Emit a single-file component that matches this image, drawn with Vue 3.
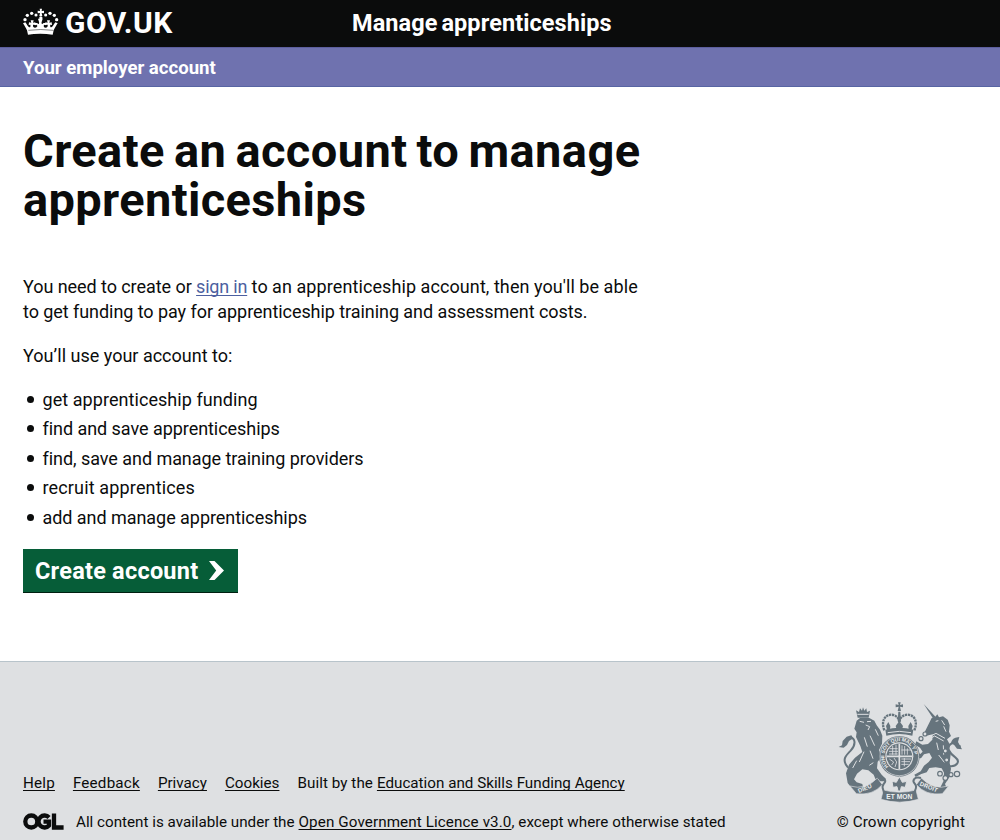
<script setup>
const uses = [
  { text: 'get apprenticeship funding', cls: 'u1' },
  { text: 'find and save apprenticeships', cls: 'u2' },
  { text: 'find, save and manage training providers', cls: 'u3' },
  { text: 'recruit apprentices', cls: 'u4' },
  { text: 'add and manage apprenticeships', cls: 'u5' },
]
const links = ['Help', 'Feedback', 'Privacy', 'Cookies']
</script>

<template>
  <div class="page">
    <header class="top">
      <div class="brand">
        <svg class="crown" viewBox="69 24 108 84" width="36" height="28" fill="#fff">
          <path d="M119 26h7l-1 7 7-1v8l-7-1 2 9h-9l2-9-7 1v-8l7 1z" />
          <circle cx="122.500" cy="54" r="5" />
          <circle cx="108" cy="45" r="4.600" /><circle cx="137" cy="45" r="4.600" />
          <circle cx="95" cy="40" r="5" /><circle cx="150" cy="40" r="5" />
          <circle cx="82" cy="46" r="5" /><circle cx="163" cy="46" r="5" />
          <circle cx="75" cy="59" r="5" /><circle cx="170" cy="59" r="5" />
          <path d="M84 104l-3-13C77 82 73 76 69 70l7-3c5 6 7 13 12 15 4 0 4-4 3-8l-5 1 1-8 7 1-2-7h9l-2 7 7-1v8l-7-1c-1 6 2 9 6 9 5 0 7-4 5-9l-5 2v-8l6 1c2 1 3 3 4 3 2 0 3-3 2-6l-3-10h14l-3 10c-1 3 0 6 2 6 1 0 2-2 4-3l6-1v8l-5-2c-2 5 0 9 5 9 4 0 7-3 6-9l-7 1v-8l7 1-2-7h9l-2 7 7-1 1 8-5-1c-1 4-1 8 3 8 5-2 7-9 12-15l7 3c-4 6-8 12-12 21l-3 13c-24-4-51-4-75 0z" />
          <path d="M85 91q37-5 75 0" fill="none" stroke="#0b0c0c" stroke-width="1.500" />
          <g fill="#0b0c0c"><circle cx="110" cy="78" r="2" /><circle cx="135" cy="78" r="2" /></g>
        </svg>
        <span class="govuk">GOV.UK</span>
      </div>
      <span class="service">Manage apprenticeships</span>
    </header>
    <nav class="bar"><span>Your employer account</span></nav>

    <main>
      <h1><span class="h1a">Create an account to manage</span> <span class="h1b">apprenticeships</span></h1>
      <p class="lead">
        <span class="l0">You need to create or </span><a href="#">sign in</a><span class="l1"> to an apprenticeship account, then you'll be able</span><br />
        <span class="l2">to get funding to pay for apprenticeship training and assessment costs.</span>
      </p>
      <p class="sub">You’ll use your account to:</p>
      <ul>
        <li v-for="u in uses" :key="u.text"><span :class="u.cls">{{ u.text }}</span></li>
      </ul>
      <button class="start">
        <span>Create account</span>
        <svg width="15" height="19" viewBox="0 0 15 19" fill="#fff"><path d="M0 0h5.500L15 9.500 5.500 19H0l7.200-9.500z" /></svg>
      </button>
    </main>

    <footer>
      <div class="meta">
        <div class="links">
          <a v-for="l in links" :key="l" :class="l.toLowerCase()" href="#">{{ l }}</a>
          <span class="built">Built by the</span>
          <a class="agency" href="#">Education and Skills Funding Agency</a>
        </div>
        <div class="licence">
          <svg width="41" height="17" viewBox="0 0 41 17" fill="none" stroke="#0b0c0c" stroke-width="4.300">
            <circle cx="8.300" cy="8.500" r="6" />
            <path d="M26 4.500A6 6 0 1 0 26 12.500V8.600H20.500" />
            <path d="M31 .5v14h9.600" />
          </svg>
          <span class="all">All content is available under the</span>
          <a class="ogl" href="#">Open Government Licence v3.0</a><span class="rest">, except where otherwise stated</span>
        </div>
      </div>
      <div class="copyright">
        <svg class="crest" viewBox="51 30 378 312" width="126" height="104" fill="#66747d">
          <!-- lion -->
          <path d="M113 83l-5-22 9 5 3-11 6 7 3-10 4 10 6-7 2 11 9-4-4 21z" />
          <path d="M110 92l10-8h28l15 8 7 14 10 13 7 18-1 24-9 19 5 24-9 11-2 20 14 19 12 12-3 8h-25l-8-20-16-13-18-3-16 13-9 17 8 9 17 5 2 9-9 6-25-3-12-15-5-29 9-26 18-21 22-17-6-18-13-27 2-14-7-11z" />
          <path d="M84 233c-20-23-7-36 8-51 16-17 16-40-4-39" class="line" />
          <path d="M56 171l10-5 2-13 12-13 14-4 6 9-13 8-6 12-10 8z" />
          <path class="cut" d="M112 73h34M119 94l13 3M141 95l12-1M137 105l12 5-5 10M166 118l9 19M150 137l14 30M133 142l9 28M150 182l9 24M132 185l-14 31M110 212l-12 22M160 218l-12 8" />
          <!-- unicorn -->
          <path d="M311 42l36 39-8 4z" />
          <path d="M335 84l11-4 6-7 5 9 12-3 14 10 6 17-2 19 6 13-12 10 8 15-3 13 6 17-3 26 4 17-4 24-14 22 5 12-12 7-8-7 11-22 1-24-7-13-18-3-19 2-8 13-16 5-17 9-4-7 19-10 10-17 14-11 10-13-8-14-16 4-9 12-13-1-4-16 8-5 6 10 8-8-8-12-15-9 4-10 18 10 17-2 13-13 1-16-19 4-6-9z" />
          <path d="M386 228c25 4 36-14 20-26-16-11-30-30-12-41 12-7 14 9 28 8" class="line" />
          <path d="M393 158c6-16 13-14 25-17l-4 15 12 22-15-2-9-12z" />
          <path class="cut" d="M347 94l8-2M365 91l9 14M371 109l7 16M332 138l16-8 27 15M330 146l14-8 27 15M350 158l5 22M370 166l1 28M356 195l17 22" />
          <g class="ring">
            <circle cx="315" cy="132" r="6" /><circle cx="303" cy="146" r="6" /><circle cx="376" cy="183" r="6" />
            <circle cx="380" cy="210" r="6" /><circle cx="360" cy="251" r="7" /><circle cx="376" cy="264" r="7" />
            <circle cx="393" cy="254" r="6" /><circle cx="411" cy="252" r="8" />
          </g>
          <!-- shield and garter -->
          <circle cx="238" cy="199" r="61" />
          <circle cx="238" cy="199" r="42" fill="#dee0e2" />
          <circle cx="238" cy="199" r="38.500" />
          <g fill="none" stroke="#dee0e2">
            <circle cx="238" cy="199" r="58" stroke-width="2" />
            <path d="M238 161v76M200 199h76" stroke-width="5" />
            <path d="M209 176h24M207 184h27M207 192h26M218 168v26M228 164v30M246 166v28M254 168v26M262 175v19M244 180h29M208 207l13 9-6 9M222 204l8 12-5 15M244 207h29M244 215h26M244 223h22M253 204v25" stroke-width="2.500" />
          </g>
          <!-- royal crown -->
          <path d="M193 121c-10-26 0-46 20-47 12 0 21 7 25 18 4-11 13-18 25-18 21 1 31 21 20 47" class="arches" />
          <path d="M234 37h8l-2 8 9-2v9l-9-2 3 13h-10l3-13-9 2v-9l9 2zM235 65h6l2 28-5 10-5-10zM198 108l7-12 6 12-1 11h-9zM227 108l11-15 11 15-3 11h-16zM265 108l7-12 6 12-3 11h-9zM196 119q42-12 84 0l-3 18q-39-10-78 0z" />
          <path class="cut" d="M203 128q35-8 70 0" />
          <!-- motto ribbon -->
          <path d="M90 288q46 14 82-24l15 20q-30 34-78 27zM386 288q-46 14-82-24l-15 20q30 34 78 27zM190 300q48 13 98 0l7 28q-56 17-112 0z" stroke="#dee0e2" stroke-width="2" />
          <path d="M173 264c21-5 28 8 18 18-10 11 3 18 2 34M303 264c-21-5-28 8-18 18 10 11-3 18-4 34" class="line" />
          <path d="M238 260l9 17 13-3-4 18-12-2-3 13h-7l-3-13-12 2-3-18 13 3z" stroke="#dee0e2" stroke-width="3" />
          <g fill="#eef0f1" font-family="Liberation Sans, sans-serif" font-weight="700">
            <path id="garter" d="M206 230A45 45 0 1 1 270 230" fill="none" />
            <text font-size="15"><textPath href="#garter">HONI SOIT QUI MAL Y P</textPath></text>
            <text font-size="18" transform="translate(117 309) rotate(-23)">DIEU</text>
            <text font-size="18" transform="translate(298 286) rotate(22)">DROIT</text>
            <text x="199" y="326" font-size="20">ET MON</text>
          </g>
        </svg>
        <span>© Crown copyright</span>
      </div>
    </footer>
  </div>
</template>

<style>
body { margin: 0; background: #fff; }
</style>

<style scoped>
* { box-sizing: border-box; }
.page { width: 1000px; height: 840px; overflow: hidden; display: flex; flex-direction: column; font-family: Roboto, "Liberation Sans", sans-serif; color: #0b0c0c; font-size: 18px; white-space: nowrap; }
.top { height: 47px; flex: none; background: #0b0c0c; color: #fff; display: grid; grid-template-columns: 329px 1fr; padding-left: 23px; font-weight: 700; }
.brand { display: flex; align-items: flex-start; gap: 6px; }
.crown { margin-top: 8px; }
.govuk { font-size: 30px; line-height: 46px; letter-spacing: .5px; }
.service { font-size: 23.5px; line-height: 46px; letter-spacing: .08px; word-spacing: -2px; }
.bar { height: 40px; flex: none; background: #6f72af; border-top: 1px solid #5d5f9e; border-bottom: 1px solid #5865a3; color: #fff; padding-left: 23px; font-size: 18.600px; font-weight: 700; line-height: 40px; }
main { height: 574px; flex: none; padding: 39px 23px 0; display: flex; flex-direction: column; align-items: flex-start; }
h1 { margin: 0; font-size: 47px; line-height: 49px; font-weight: 700; }
h1 span { display: block; }
.h1a { letter-spacing: .4px; word-spacing: -2.900px; }
.h1b { letter-spacing: .35px; }
p { margin: 0; line-height: 24.500px; }
.lead { margin-top: 51px; }
.l0 { letter-spacing: -.06px; }
.l1 { letter-spacing: .1px; word-spacing: -.2px; }
.l2 { letter-spacing: -.06px; }
.sub { margin-top: 20px; }
a { color: inherit; text-decoration: underline; text-decoration-thickness: 1px; text-underline-offset: 2px; text-decoration-skip-ink: none; }
.lead a { color: #4c5fa0; letter-spacing: -.2px; }
ul { list-style: none; margin: 16px 0 0; padding: 0; }
li { display: flex; align-items: center; height: 29.500px; gap: 8.500px; padding-left: 4px; }
li::before { content: ""; width: 7px; height: 7px; border-radius: 50%; background: #0b0c0c; }
.u1 { letter-spacing: .06px; }
.u2, .u3 { letter-spacing: -.05px; }
.u4 { letter-spacing: .15px; }
.u5 { letter-spacing: -.05px; }
.start { margin-top: 17px; height: 44px; width: 215px; border: 0; border-bottom: 1px solid #002010; background: #065d38; color: #fff; display: flex; align-items: center; gap: 11px; padding: 0 0 0 12px; font: 700 23.500px Roboto, sans-serif; letter-spacing: .23px; }
footer { flex: 1; background: #dee0e2; border-top: 1px solid #b8c4cb; display: flex; justify-content: space-between; padding: 38px 35px 0 23px; font-size: 15.200px; }
.meta { padding-top: 72px; }
.links { display: flex; line-height: 22px; }
.links a { margin-right: 18px; }
.links .help, .links .feedback { letter-spacing: .2px; }
.privacy { letter-spacing: 0; }
.cookies { letter-spacing: 0; }
.agency { letter-spacing: .01px; }
.built { margin-right: 4px; letter-spacing: .06px; }
.licence { display: flex; align-items: center; line-height: 22px; margin-top: 17px; }
.licence svg { margin-right: 12px; position: relative; top: -1px; }
.all { margin-right: 4px; }
.ogl { letter-spacing: .11px; }
.rest { letter-spacing: .04px; }
.copyright { display: flex; flex-direction: column; align-items: flex-end; line-height: 22px; letter-spacing: .15px; }
.crest { margin-right: 2px; margin-bottom: 7px; letter-spacing: 0; }
.cut { fill: none; stroke: #dee0e2; stroke-width: 3; }
.line { fill: none; stroke: #66747d; stroke-width: 6; }
.ring { fill: #dee0e2; stroke: #66747d; stroke-width: 3.500; }
.arches { fill: none; stroke: #66747d; stroke-width: 7; stroke-dasharray: 7 2; }
</style>
